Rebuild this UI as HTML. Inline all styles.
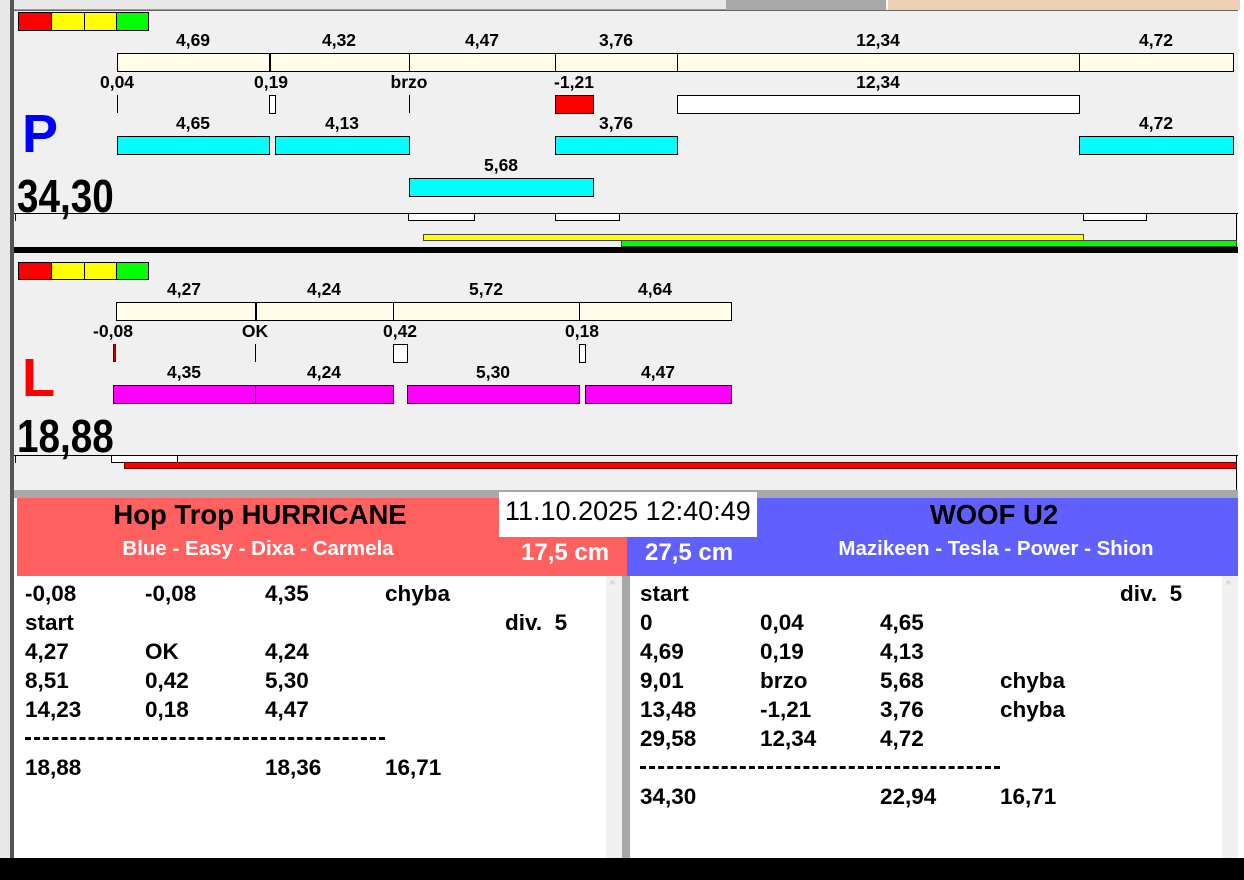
<!DOCTYPE html>
<html><head><meta charset="utf-8"><style>
*{margin:0;padding:0;box-sizing:border-box}
body{width:1244px;height:880px;position:relative;background:#fff;overflow:hidden;font-family:"Liberation Sans",Arial,sans-serif;font-weight:bold}
div{position:absolute}
.b{border:1px solid #000}
.t{font-size:17.5px;color:#000;transform:translateX(-50%);white-space:nowrap;line-height:17px}
.cr{background:#fffde8}
.cy{background:#00ffff}
.mg{background:#ff00ff}
.row{font-size:22.5px;line-height:24px;white-space:nowrap}
.big{font-size:46px;line-height:40px;transform:scaleX(0.84);transform-origin:0 0}
</style></head><body>
<!-- frame -->
<div style="left:0;top:0;width:12px;height:860px;background:#e8e8e8"></div>
<div style="left:10px;top:0;width:4px;height:860px;background:#555"></div>
<div style="left:14px;top:0;width:712px;height:10px;background:#e8e8e8;border-bottom:1px solid #999"></div>
<div style="left:726px;top:0;width:160px;height:10px;background:#a8a8a8"></div>
<div style="left:888px;top:0;width:352px;height:12px;background:#f0d0b4"></div>
<!-- panel P -->
<div style="left:14px;top:10px;width:1224px;height:238px;background:#f0f0f0;border-top:1px solid #666"></div>
<div style="left:1238px;top:10px;width:6px;height:850px;background:#fff"></div>
<div class="b" style="left:18px;top:12px;width:34px;height:19px;background:#f00"></div>
<div class="b" style="left:51px;top:12px;width:34px;height:19px;background:#ff0"></div>
<div class="b" style="left:84px;top:12px;width:33px;height:19px;background:#ff0"></div>
<div class="b" style="left:116px;top:12px;width:33px;height:19px;background:#0f0"></div>

<div class="t" style="left:193px;top:32px">4,69</div>
<div class="t" style="left:339px;top:32px">4,32</div>
<div class="t" style="left:482px;top:32px">4,47</div>
<div class="t" style="left:616px;top:32px">3,76</div>
<div class="t" style="left:878px;top:32px">12,34</div>
<div class="t" style="left:1156px;top:32px">4,72</div>
<div class="b cr" style="left:117px;top:53px;width:153px;height:19px"></div>
<div class="b cr" style="left:269px;top:53px;width:141px;height:19px"></div>
<div class="b cr" style="left:409px;top:53px;width:147px;height:19px"></div>
<div class="b cr" style="left:555px;top:53px;width:123px;height:19px"></div>
<div class="b cr" style="left:677px;top:53px;width:403px;height:19px"></div>
<div class="b cr" style="left:1079px;top:53px;width:155px;height:19px"></div>
<div style="left:269px;top:53px;width:2px;height:19px;background:#000"></div>

<div class="t" style="left:117px;top:74px">0,04</div>
<div class="t" style="left:271px;top:74px">0,19</div>
<div class="t" style="left:409px;top:74px">brzo</div>
<div class="t" style="left:574px;top:74px">-1,21</div>
<div class="t" style="left:878px;top:74px">12,34</div>
<div style="left:117px;top:95px;width:1px;height:18px;background:#000"></div>
<div class="b" style="left:269px;top:95px;width:7px;height:19px;background:#fff"></div>
<div style="left:409px;top:95px;width:1px;height:18px;background:#000"></div>
<div class="b" style="left:555px;top:95px;width:39px;height:19px;background:#f00"></div>
<div class="b" style="left:677px;top:95px;width:403px;height:19px;background:#fff"></div>

<div style="left:22px;top:104px;font-size:54px;color:#0000ff;line-height:60px">P</div>
<div class="t" style="left:193px;top:115px">4,65</div>
<div class="t" style="left:342px;top:115px">4,13</div>
<div class="t" style="left:616px;top:115px">3,76</div>
<div class="t" style="left:1156px;top:115px">4,72</div>
<div class="b cy" style="left:117px;top:136px;width:153px;height:19px"></div>
<div class="b cy" style="left:275px;top:136px;width:135px;height:19px"></div>
<div class="b cy" style="left:555px;top:136px;width:123px;height:19px"></div>
<div class="b cy" style="left:1079px;top:136px;width:155px;height:19px"></div>
<div class="t" style="left:501px;top:157px">5,68</div>
<div class="b cy" style="left:409px;top:178px;width:185px;height:19px"></div>
<div class="big" style="left:17px;top:176px">34,30</div>

<div style="left:14px;top:213px;width:1224px;height:1px;background:#000"></div>
<div style="left:15px;top:213px;width:1px;height:8px;background:#000"></div>
<div style="left:1236px;top:213px;width:1px;height:34px;background:#000"></div>
<div class="b" style="left:408px;top:213px;width:67px;height:8px;background:#fff"></div>
<div class="b" style="left:555px;top:213px;width:65px;height:8px;background:#fff"></div>
<div class="b" style="left:1083px;top:213px;width:64px;height:8px;background:#fff"></div>
<div style="left:423px;top:234px;width:661px;height:7px;background:#ff0;border:1px solid #444"></div>
<div style="left:621px;top:240px;width:616px;height:7px;background:#0f0;border:1px solid #444"></div>
<div style="left:14px;top:247px;width:1224px;height:6px;background:#000"></div>

<!-- panel L -->
<div style="left:14px;top:253px;width:1224px;height:237px;background:#f0f0f0"></div>
<div class="b" style="left:18px;top:262px;width:34px;height:18px;background:#f00"></div>
<div class="b" style="left:51px;top:262px;width:34px;height:18px;background:#ff0"></div>
<div class="b" style="left:84px;top:262px;width:33px;height:18px;background:#ff0"></div>
<div class="b" style="left:116px;top:262px;width:33px;height:18px;background:#0f0"></div>

<div class="t" style="left:184px;top:281px">4,27</div>
<div class="t" style="left:324px;top:281px">4,24</div>
<div class="t" style="left:486px;top:281px">5,72</div>
<div class="t" style="left:655px;top:281px">4,64</div>
<div class="b cr" style="left:116px;top:302px;width:140px;height:19px"></div>
<div class="b cr" style="left:255px;top:302px;width:139px;height:19px"></div>
<div class="b cr" style="left:393px;top:302px;width:187px;height:19px"></div>
<div class="b cr" style="left:579px;top:302px;width:153px;height:19px"></div>
<div style="left:255px;top:302px;width:2px;height:19px;background:#000"></div>

<div class="t" style="left:113px;top:323px">-0,08</div>
<div class="t" style="left:255px;top:323px">OK</div>
<div class="t" style="left:400px;top:323px">0,42</div>
<div class="t" style="left:582px;top:323px">0,18</div>
<div style="left:113px;top:344px;width:3px;height:18px;background:#c00;border:1px solid #600"></div>
<div style="left:255px;top:344px;width:1px;height:18px;background:#000"></div>
<div class="b" style="left:393px;top:344px;width:15px;height:19px;background:#fff"></div>
<div class="b" style="left:579px;top:344px;width:7px;height:19px;background:#fff"></div>

<div style="left:22px;top:348px;font-size:54px;color:#f00;line-height:60px">L</div>
<div class="t" style="left:184px;top:364px">4,35</div>
<div class="t" style="left:324px;top:364px">4,24</div>
<div class="t" style="left:493px;top:364px">5,30</div>
<div class="t" style="left:658px;top:364px">4,47</div>
<div class="b mg" style="left:113px;top:385px;width:143px;height:19px"></div>
<div class="b mg" style="left:255px;top:385px;width:139px;height:19px"></div>
<div class="b mg" style="left:407px;top:385px;width:173px;height:19px"></div>
<div class="b mg" style="left:585px;top:385px;width:147px;height:19px"></div>
<div class="big" style="left:17px;top:416px">18,88</div>

<div style="left:14px;top:455px;width:1224px;height:1px;background:#000"></div>
<div style="left:15px;top:455px;width:1px;height:8px;background:#000"></div>
<div class="b" style="left:111px;top:455px;width:67px;height:8px;background:#fff"></div>
<div style="left:124px;top:462px;width:1113px;height:7px;background:#f00;border:1px solid #600"></div>
<div style="left:1236px;top:455px;width:1px;height:35px;background:#000"></div>

<!-- bottom -->
<div style="left:14px;top:490px;width:1224px;height:8px;background:#a8a8a8"></div>
<div style="left:17px;top:498px;width:610px;height:78px;background:#ff6060"></div>
<div style="left:627px;top:498px;width:611px;height:78px;background:#6060ff"></div>
<div style="left:499px;top:492px;width:258px;height:45px;background:#fff"></div>
<div style="left:505px;top:496px;font-size:27px;font-weight:normal;line-height:30px;white-space:nowrap">11.10.2025 12:40:49</div>
<div class="t" style="left:260px;top:500px;font-size:27.5px;line-height:30px">Hop Trop HURRICANE</div>
<div class="t" style="left:994px;top:500px;font-size:27.5px;line-height:30px">WOOF U2</div>
<div class="t" style="left:258px;top:538px;font-size:20.5px;line-height:22px;color:#fff">Blue - Easy - Dixa - Carmela</div>
<div class="t" style="left:996px;top:538px;font-size:20.5px;line-height:22px;color:#fff">Mazikeen - Tesla - Power - Shion</div>
<div style="left:521px;top:539px;font-size:24px;line-height:28px;color:#fff;white-space:nowrap">17,5 cm</div>
<div style="left:645px;top:539px;font-size:24px;line-height:28px;color:#fff;white-space:nowrap">27,5 cm</div>

<div style="left:17px;top:576px;width:589px;height:282px;background:#fff"></div>
<div style="left:606px;top:576px;width:16px;height:282px;background:#f0f0f0"></div>
<div style="left:622px;top:576px;width:8px;height:282px;background:#a8a8a8"></div>
<div style="left:630px;top:576px;width:592px;height:282px;background:#fff"></div>
<div style="left:1222px;top:576px;width:16px;height:282px;background:#f0f0f0"></div>
<div style="left:610px;top:580px;font-size:10px;color:#bbb;font-weight:normal">^</div>
<div style="left:1226px;top:580px;font-size:10px;color:#bbb;font-weight:normal">^</div>

<div class="row" style="left:25px;top:582px">-0,08</div><div class="row" style="left:145px;top:582px">-0,08</div><div class="row" style="left:265px;top:582px">4,35</div><div class="row" style="left:385px;top:582px">chyba</div>
<div class="row" style="left:25px;top:611px">start</div><div class="row" style="left:505px;top:611px">div.&nbsp; 5</div>
<div class="row" style="left:25px;top:640px">4,27</div><div class="row" style="left:145px;top:640px">OK</div><div class="row" style="left:265px;top:640px">4,24</div>
<div class="row" style="left:25px;top:669px">8,51</div><div class="row" style="left:145px;top:669px">0,42</div><div class="row" style="left:265px;top:669px">5,30</div>
<div class="row" style="left:25px;top:698px">14,23</div><div class="row" style="left:145px;top:698px">0,18</div><div class="row" style="left:265px;top:698px">4,47</div>
<div style="left:25px;top:737px;width:360px;height:3px;border-top:3px dashed #000"></div>
<div class="row" style="left:25px;top:756px">18,88</div><div class="row" style="left:265px;top:756px">18,36</div><div class="row" style="left:385px;top:756px">16,71</div>

<div class="row" style="left:640px;top:582px">start</div><div class="row" style="left:1120px;top:582px">div.&nbsp; 5</div>
<div class="row" style="left:640px;top:611px">0</div><div class="row" style="left:760px;top:611px">0,04</div><div class="row" style="left:880px;top:611px">4,65</div>
<div class="row" style="left:640px;top:640px">4,69</div><div class="row" style="left:760px;top:640px">0,19</div><div class="row" style="left:880px;top:640px">4,13</div>
<div class="row" style="left:640px;top:669px">9,01</div><div class="row" style="left:760px;top:669px">brzo</div><div class="row" style="left:880px;top:669px">5,68</div><div class="row" style="left:1000px;top:669px">chyba</div>
<div class="row" style="left:640px;top:698px">13,48</div><div class="row" style="left:760px;top:698px">-1,21</div><div class="row" style="left:880px;top:698px">3,76</div><div class="row" style="left:1000px;top:698px">chyba</div>
<div class="row" style="left:640px;top:727px">29,58</div><div class="row" style="left:760px;top:727px">12,34</div><div class="row" style="left:880px;top:727px">4,72</div>
<div style="left:640px;top:766px;width:360px;height:3px;border-top:3px dashed #000"></div>
<div class="row" style="left:640px;top:785px">34,30</div><div class="row" style="left:880px;top:785px">22,94</div><div class="row" style="left:1000px;top:785px">16,71</div>

<div style="left:0;top:858px;width:1244px;height:22px;background:#000"></div>
</body></html>
